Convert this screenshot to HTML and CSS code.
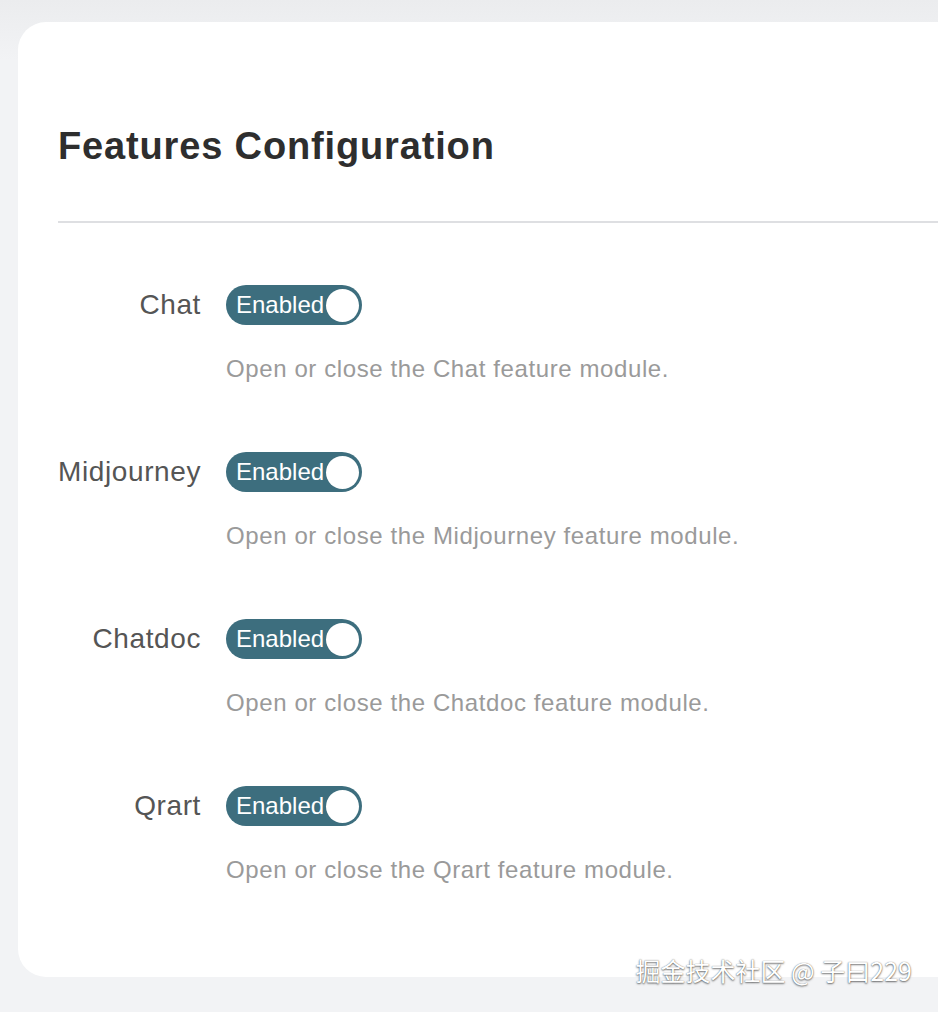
FILE: index.html
```html
<!DOCTYPE html>
<html lang="en">
<head>
<meta charset="utf-8">
<title>Features Configuration</title>
<link rel="stylesheet" href="styles.css">
</head>
<body>
<div class="page">
  <div class="card">
    <div class="card-header">
      <h1 class="title">Features Configuration</h1>
    </div>
    <div class="form">
      <div class="row">
        <div class="label">Chat</div>
        <div class="control">
          <div class="switch"><span class="switch-text">Enabled</span><span class="knob"></span></div>
          <div class="help">Open or close the Chat feature module.</div>
        </div>
      </div>
      <div class="row">
        <div class="label">Midjourney</div>
        <div class="control">
          <div class="switch"><span class="switch-text">Enabled</span><span class="knob"></span></div>
          <div class="help">Open or close the Midjourney feature module.</div>
        </div>
      </div>
      <div class="row">
        <div class="label">Chatdoc</div>
        <div class="control">
          <div class="switch"><span class="switch-text">Enabled</span><span class="knob"></span></div>
          <div class="help">Open or close the Chatdoc feature module.</div>
        </div>
      </div>
      <div class="row">
        <div class="label">Qrart</div>
        <div class="control">
          <div class="switch"><span class="switch-text">Enabled</span><span class="knob"></span></div>
          <div class="help">Open or close the Qrart feature module.</div>
        </div>
      </div>
    </div>
  </div>
  <div class="watermark">掘金技术社区 @ 子曰229</div>
</div>
</body>
</html>
```
FILE: styles.css
```css
html, body {
  margin: 0;
  padding: 0;
  height: 100%;
  overflow: hidden;
}
body {
  background: linear-gradient(#ebecee 0, #f2f3f5 60px, #f2f3f5 100%);
  font-family: "Liberation Sans", Arial, sans-serif;
}
.page {
  position: relative;
  height: 1012px;
  padding: 22px 0 0 18px;
  box-sizing: border-box;
}
.card {
  background: #fff;
  border-radius: 28px 0 0 28px;
  margin-right: -40px;
  height: 955px;
  padding-left: 40px;
  box-sizing: border-box;
}
.card-header {
  height: 201px;
  border-bottom: 2px solid #dedfe2;
  display: flex;
  align-items: flex-end;
  padding-bottom: 52px;
  box-sizing: border-box;
}
.title {
  margin: 0;
  font-size: 38px;
  line-height: 46px;
  font-weight: 700;
  color: #2e2e2e;
  letter-spacing: 0.85px;
}
.form {
  padding-top: 62px;
  display: flex;
  flex-direction: column;
  gap: 67px;
}
.row {
  display: grid;
  grid-template-columns: 143px 1fr;
  column-gap: 25px;
}
.label {
  text-align: right;
  font-size: 28px;
  line-height: 40px;
  color: #555;
  height: 40px;
  letter-spacing: 0.6px;
}
.control {
  display: flex;
  flex-direction: column;
  align-items: flex-start;
  gap: 28px;
}
.switch {
  width: 136px;
  height: 40px;
  border-radius: 20px;
  background: #3d6e7e;
  display: flex;
  align-items: center;
  justify-content: space-between;
  padding: 0 3px 0 10px;
  box-sizing: border-box;
}
.switch-text {
  color: #fff;
  font-size: 24px;
  line-height: 1;
}
.knob {
  width: 33px;
  height: 33px;
  border-radius: 50%;
  background: #fff;
}
.help {
  font-size: 24px;
  line-height: 32px;
  color: #9a9a9a;
  letter-spacing: 0.6px;
}
.watermark {
  position: absolute;
  right: 26px;
  bottom: 26px;
  font-family: "Noto Sans CJK SC", "Liberation Sans", sans-serif;
  font-size: 25px;
  line-height: 32px;
  color: #fff;
  text-shadow: 0 1px 2px rgba(0,0,0,0.55), 0 0 1px rgba(0,0,0,0.5);
}
```
